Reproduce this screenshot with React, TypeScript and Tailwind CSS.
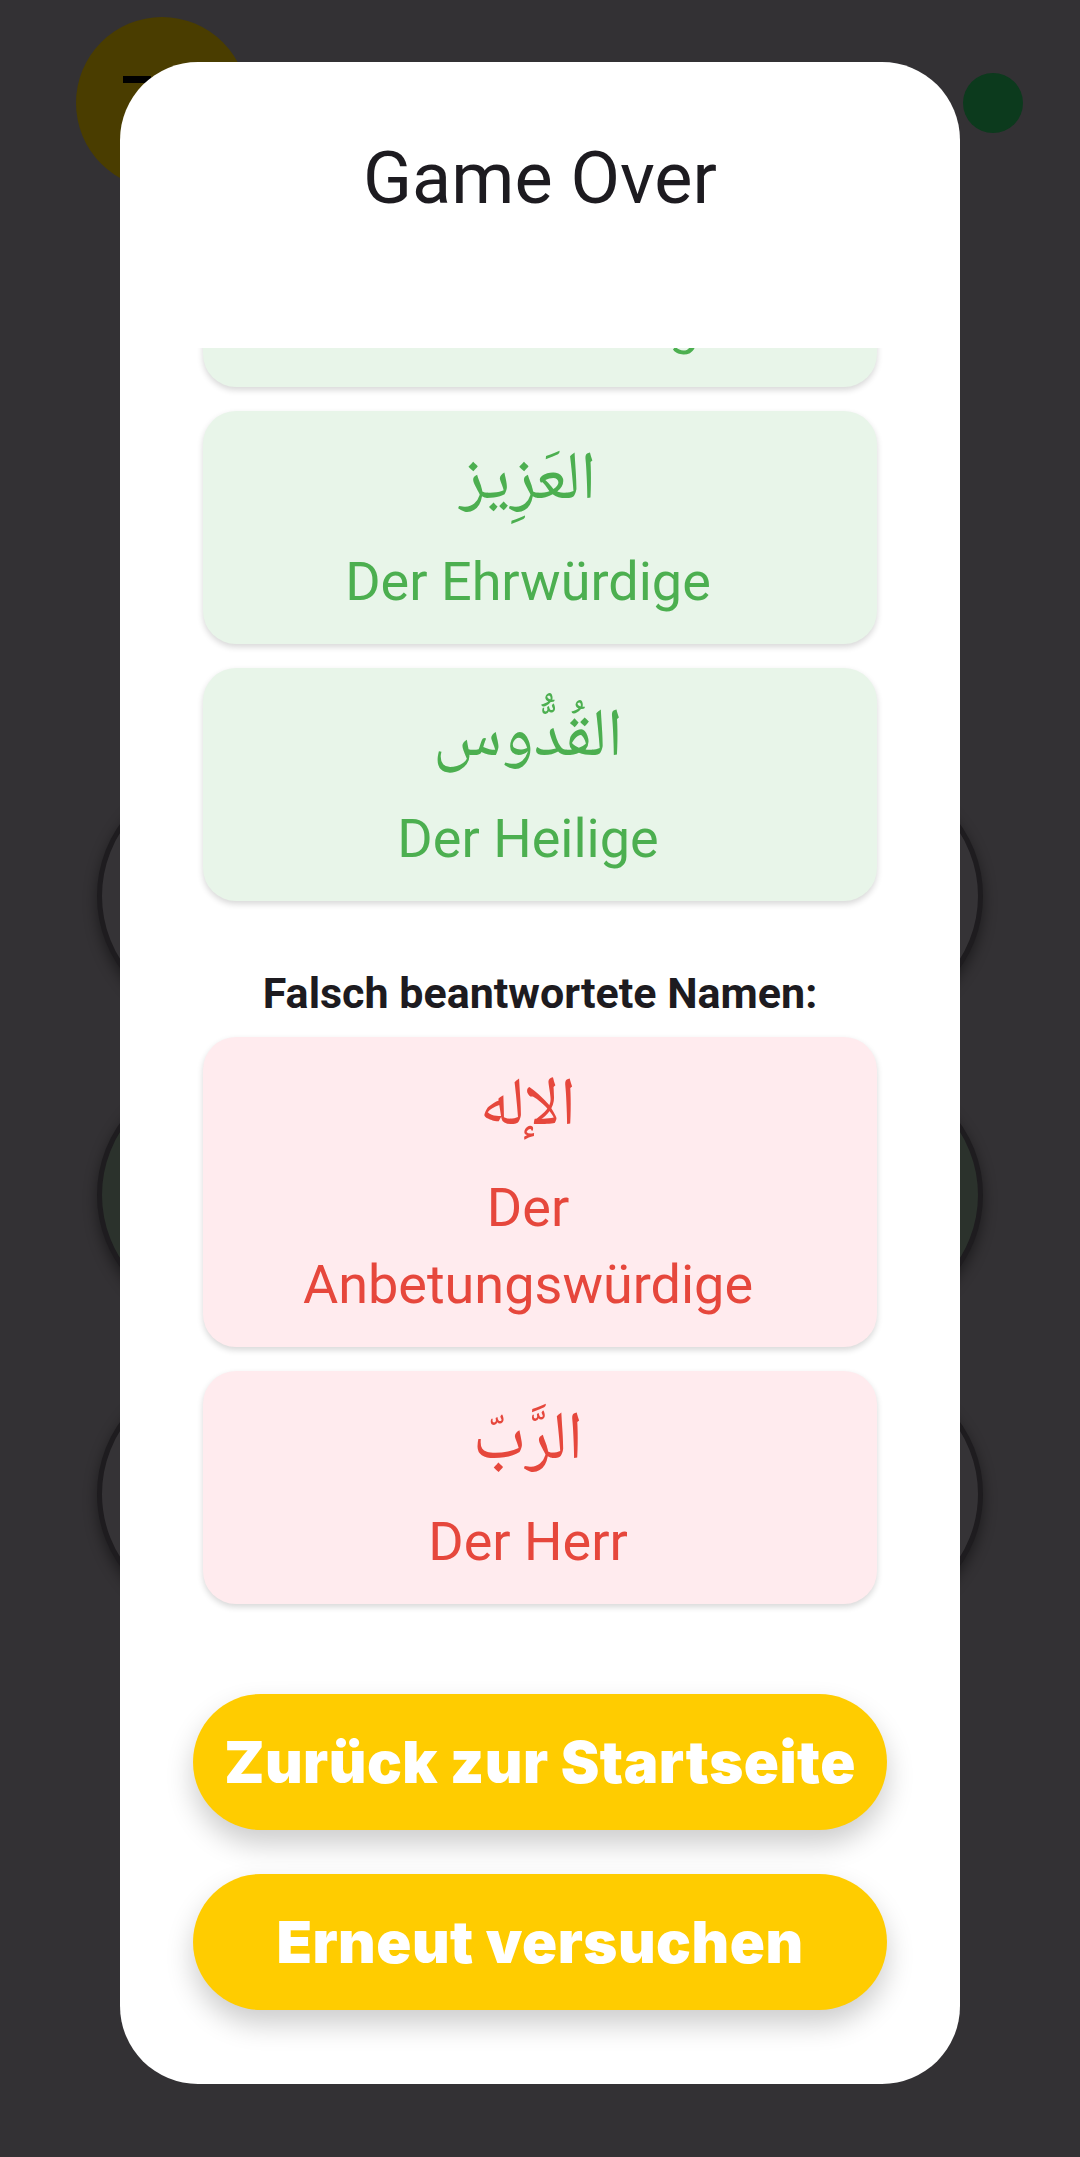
import React from 'react';

interface NameCard {
  arabic: string;
  german: string[];
}

const correct: NameCard[] = [
  { arabic: 'الرَّحِيم', german: ['Der Barmherzige'] },
  { arabic: 'العَزِيز', german: ['Der Ehrwürdige'] },
  { arabic: 'القُدُّوس', german: ['Der Heilige'] },
];

const wrong: NameCard[] = [
  { arabic: 'الإله', german: ['Der', 'Anbetungswürdige'] },
  { arabic: 'الرَّبّ', german: ['Der Herr'] },
];

const sans = { fontFamily: 'Roboto, "Noto Sans", sans-serif' };
const arabicFont = { fontFamily: '"Noto Naskh Arabic", "Noto Sans Arabic", "DejaVu Sans", sans-serif' };

function Card({ card, tone }: { card: NameCard; tone: 'green' | 'red' }) {
  const box = tone === 'green' ? 'bg-[#e8f5e9] text-[#4caf50]' : 'bg-[#ffebee] text-[#e6473c]';
  return (
    <div className={`rounded-[33px] ${box} pb-6 pl-3 pr-9 pt-6 text-center shadow-[0_3px_6px_rgba(0,0,0,0.16)]`}>
      <div dir="rtl" className="text-[68px] leading-[96px]" style={arabicFont}>
        {card.arabic}
      </div>
      <div className="mt-3">
        {card.german.map((line) => (
          <div key={line} className="text-[54px] leading-[77px]" style={sans}>
            {line}
          </div>
        ))}
      </div>
    </div>
  );
}

function AnswerCircle({ tint }: { tint?: boolean }) {
  return (
    <div
      className={`h-[248px] w-[248px] rounded-full border-[5px] border-[#1e1c1f] shadow-[0_6px_14px_rgba(0,0,0,0.45)] ${
        tint ? 'bg-[#2b322c]' : 'bg-[#353336]'
      }`}
    />
  );
}

// the quiz screen behind the dialog, already dimmed by the barrier
function QuizBehind() {
  return (
    <div className="flex flex-col">
      <div className="flex items-start justify-between pl-[76px] pr-[57px] pt-[17px]">
        <div className="flex h-[172px] w-[172px] items-start rounded-full bg-[#4a3d00] pl-[47px] pt-[59px]">
          <div className="h-[7px] w-[28px] bg-black" />
        </div>
        <div className="mt-[56px] h-[60px] w-[60px] rounded-full bg-[#0c3a1d]" />
      </div>

      <div className="mt-[583px] flex flex-col gap-[51px] px-[97px]">
        {[false, true, false].map((tint, i) => (
          <div key={i} className="flex justify-between">
            <AnswerCircle tint={tint} />
            <AnswerCircle tint={tint} />
          </div>
        ))}
      </div>
    </div>
  );
}

export default function App() {
  return (
    <div className="relative h-[2157px] w-[1080px] overflow-hidden bg-[#333134]">
      <QuizBehind />

      {/* dialog */}
      <div className="absolute left-[120px] top-[62px] flex h-[2022px] w-[840px] flex-col rounded-[78px] bg-white">
        <h1 className="pt-[75px] text-center text-[72px] font-normal leading-[84px] text-[#1d1b20]" style={sans}>
          Game Over
        </h1>

        <div className="mt-[127px] h-[1292px] overflow-hidden px-[83px]">
          <div className="-mt-[194px] flex flex-col gap-6">
            {correct.map((c) => (
              <Card key={c.arabic} card={c} tone="green" />
            ))}
          </div>

          <p className="mb-4 mt-[65px] text-center text-[43px] font-bold leading-[55px] text-[#1d1b20]" style={sans}>
            Falsch beantwortete Namen:
          </p>

          <div className="flex flex-col gap-6">
            {wrong.map((c) => (
              <Card key={c.arabic} card={c} tone="red" />
            ))}
          </div>
        </div>

        <div className="mt-[54px] flex flex-col gap-[44px] px-[73px]">
          {['Zurück zur Startseite', 'Erneut versuchen'].map((label) => (
            <button
              key={label}
              className="h-[136px] rounded-full bg-[#ffcc00] text-[58px] font-black tracking-[0.5px] text-white shadow-[0_14px_28px_rgba(0,0,0,0.2)]"
              style={{ fontFamily: 'Inter, "Open Sans", sans-serif' }}
            >
              {label}
            </button>
          ))}
        </div>
      </div>
    </div>
  );
}
